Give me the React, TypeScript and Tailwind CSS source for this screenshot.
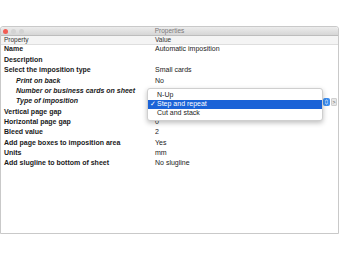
import { Fragment } from "react";

const rows = [
  { label: "Name", value: "Automatic imposition", sub: false },
  { label: "Description", value: "", sub: false },
  { label: "Select the imposition type", value: "Small cards", sub: false },
  { label: "Print on back", value: "No", sub: true },
  { label: "Number or business cards on sheet", value: "", sub: true },
  { label: "Type of imposition", value: "", sub: true },
  { label: "Vertical page gap", value: "", sub: false },
  { label: "Horizontal page gap", value: "0", sub: false },
  { label: "Bleed value", value: "2", sub: false },
  { label: "Add page boxes to imposition area", value: "Yes", sub: false },
  { label: "Units", value: "mm", sub: false },
  { label: "Add slugline to bottom of sheet", value: "No slugline", sub: false },
];

const options = ["N-Up", "Step and repeat", "Cut and stack"];

export default function App() {
  return (
    <div
      className="w-[340px] h-[260px] bg-white pt-[26px] pb-[26px] text-[7px] text-[#1a1a1a]"
      style={{ fontFamily: '"Liberation Sans", Arial, sans-serif' }}
    >
      <div className="relative w-[339px] h-[208px] border border-[#c9c9c9] rounded-t-[3px] flex flex-col bg-white">
        {/* title bar */}
        <div className="relative h-[9px] bg-gradient-to-b from-[#ececec] to-[#d6d6d6] border-b border-[#bdbdbd] flex items-center justify-center rounded-t-[3px]">
          <div className="absolute left-[2px] top-[1.5px] flex gap-[3px]">
            <span className="w-[5px] h-[5px] rounded-full bg-[#f25c54]" />
            <span className="w-[5px] h-[5px] rounded-full bg-[#d3d3d3]" />
            <span className="w-[5px] h-[5px] rounded-full bg-[#d3d3d3]" />
          </div>
          <span className="text-[6.5px] leading-none text-[#7a7a7a]">Properties</span>
        </div>

        {/* header */}
        <div className="h-[8.5px] bg-[#f4f4f4] border-b border-[#dedede] grid grid-cols-[154px_1fr] items-center text-[6.5px] leading-none text-[#333]">
          <span className="pl-[3px]">Property</span>
          <span>Value</span>
        </div>

        {/* rows */}
        <div className="grid grid-cols-[154px_1fr] auto-rows-[10.36px]">
          {rows.map((r) => (
            <Fragment key={r.label}>
              <span
                className={
                  "flex items-center font-bold whitespace-nowrap " +
                  (r.sub ? "pl-[15px] italic" : "pl-[3px]")
                }
              >
                {r.label}
              </span>
              <span className="flex items-center whitespace-nowrap">{r.value}</span>
            </Fragment>
          ))}
        </div>

        {/* select control behind popup */}
        <div className="absolute left-[322px] top-[71px] flex items-center gap-[1px]">
          <span className="w-[7px] h-[8px] rounded-[2px] bg-[#3d8ef0] flex items-center justify-center">
            <svg width="5" height="6" viewBox="0 0 5 6">
              <path d="M1 2.4 L2.5 1 L4 2.4 M1 3.6 L2.5 5 L4 3.6" stroke="white" strokeWidth="0.8" fill="none" />
            </svg>
          </span>
          <span className="w-[6px] h-[8px] rounded-[1px] bg-[#e6e6e6] border border-[#cfcfcf] flex items-center justify-center text-[5px] leading-none text-[#555]">
            &gt;
          </span>
        </div>

        {/* popup menu */}
        <div className="absolute left-[146px] top-[61px] w-[176px] h-[33px] bg-white border border-[#cfcfcf] rounded-[3px] shadow-[0_2px_5px_rgba(0,0,0,0.25)] flex flex-col justify-center">
          {options.map((o, i) => (
            <div
              key={o}
              className={
                "h-[9px] flex items-center relative pl-[9px] " +
                (i === 1 ? "bg-[#1b63d7] text-white" : "text-[#1a1a1a]")
              }
            >
              {i === 1 && <span className="absolute left-[1.5px] text-[6.5px] leading-none">✓</span>}
              <span>{o}</span>
            </div>
          ))}
        </div>
      </div>
    </div>
  );
}
